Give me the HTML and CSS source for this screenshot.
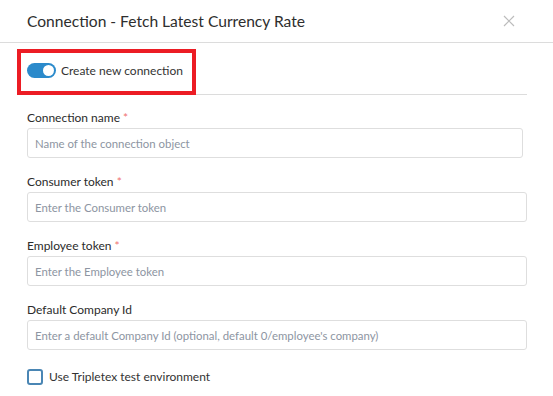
FILE: index.html
```html
<!DOCTYPE html>
<html lang="en">
<head>
  <meta charset="UTF-8" />
  <meta name="viewport" content="width=device-width, initial-scale=1.0" />
  <title>Connection - Fetch Latest Currency Rate</title>
  <link rel="stylesheet" href="styles.css">
</head>
<body>
  <div class="modal">
    <div class="modal-header">
      <h1>Connection - Fetch Latest Currency Rate</h1>
      <button class="close" aria-label="Close">
        <svg width="12" height="12" viewBox="0 0 12 12">
          <path d="M1 1 L11 11 M11 1 L1 11" stroke="#bcbcbc" stroke-width="1.2" fill="none" />
        </svg>
      </button>
    </div>

    <div class="modal-body">
      <div class="toggle-row">
        <span class="toggle"><span class="knob"></span></span>
        <span class="toggle-label">Create new connection</span>
        <div class="highlight"></div>
      </div>

      <div class="field narrow">
        <label>Connection name <span class="req">*</span></label>
        <input type="text" placeholder="Name of the connection object" />
      </div>

      <div class="field">
        <label>Consumer token <span class="req">*</span></label>
        <input type="text" placeholder="Enter the Consumer token" />
      </div>

      <div class="field">
        <label>Employee token <span class="req">*</span></label>
        <input type="text" placeholder="Enter the Employee token" />
      </div>

      <div class="field">
        <label>Default Company Id</label>
        <input type="text" placeholder="Enter a default Company Id (optional, default 0/employee's company)" />
      </div>

      <label class="check">
        <span class="box"></span>
        Use Tripletex test environment
      </label>
    </div>
  </div>
</body>
</html>
```

FILE: styles.css
```css
body {
  font-family: Lato, sans-serif;
  background: #fff;
  color: #333;
  margin: 0;
}
.modal-header {
  height: 42px;
  border-bottom: 1px solid #dcdcdc;
  display: flex;
  align-items: center;
  padding: 0 38px 0 27px;
}
.modal-header h1 {
  flex: 1;
  margin: 0;
  font-size: 15.6px;
  line-height: 20px;
  font-weight: normal;
  color: #2e2e2e;
}
.close {
  border: 0;
  background: none;
  padding: 0;
  width: 12px;
  height: 12px;
  display: flex;
}
.modal-body {
  padding: 0 26px 0 27px;
}
.toggle-row {
  position: relative;
  height: 51px;
  border-bottom: 1px solid #dcdcdc;
  display: flex;
  align-items: center;
  gap: 5px;
}
.toggle {
  width: 29px;
  height: 15px;
  border-radius: 8px;
  background: #2b8acb;
  position: relative;
  margin-top: 4px;
}
.knob {
  position: absolute;
  right: 2px;
  top: 2px;
  width: 11px;
  height: 11px;
  border-radius: 50%;
  background: #fff;
}
.toggle-label {
  font-size: 12px;
  line-height: 16px;
  margin-top: 4px;
  color: #333;
}
.highlight {
  position: absolute;
  left: -10px;
  top: 6px;
  width: 171px;
  height: 38px;
  border: 4px solid #ec1c24;
}
.field {
  margin-top: 16px;
}
.field.narrow {
  margin-top: 15px;
}
.field label {
  display: block;
  font-size: 12px;
  line-height: 16px;
  color: #2b2b2b;
  margin-bottom: 2px;
}
.req {
  color: #f0726f;
}
.field input {
  display: block;
  box-sizing: border-box;
  width: 100%;
  height: 30px;
  border: 1px solid #dedede;
  border-radius: 3px;
  padding: 0 7px;
  font-family: inherit;
  font-size: 11.4px;
}
.field.narrow input {
  width: 496px;
}
.field input::placeholder {
  color: #8d95a2;
}
.check {
  display: flex;
  align-items: center;
  gap: 6px;
  margin-top: 19px;
  font-size: 12px;
  line-height: 16px;
  color: #333;
}
.box {
  width: 16px;
  height: 16px;
  box-sizing: border-box;
  border: 2px solid #4a86b4;
  border-radius: 3px;
}
```
